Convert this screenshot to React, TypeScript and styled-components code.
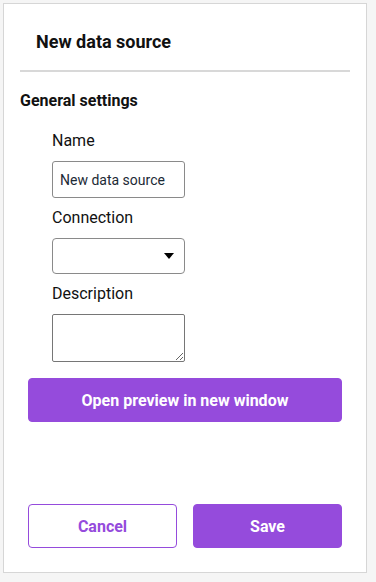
import React from "react";
import styled, { createGlobalStyle } from "styled-components";

const GlobalStyle = createGlobalStyle`
  html, body {
    margin: 0;
    padding: 0;
    background: #f5f5f5;
    font-family: Roboto, "Liberation Sans", sans-serif;
  }
`;

const Page = styled.div`
  padding: 3px 9px 9px 3px;
  box-sizing: border-box;
  width: 376px;
  height: 582px;
`;

const Panel = styled.div`
  height: 570px;
  box-sizing: border-box;
  background: #fff;
  border: 1px solid #d6d6d6;
  display: flex;
  flex-direction: column;
  padding: 0 16px;
`;

const Header = styled.div`
  padding: 28px 0 18px 16px;
  border-bottom: 2px solid #d8d8d8;
  font-size: 18px;
  font-weight: 700;
  color: #111;
  line-height: 20px;
`;

const SectionTitle = styled.div`
  margin-top: 20px;
  font-size: 16px;
  font-weight: 700;
  color: #111;
  line-height: 18px;
`;

const Fields = styled.div`
  padding-left: 32px;
  display: flex;
  flex-direction: column;
  margin-top: 21px;
`;

const Label = styled.label`
  font-size: 16px;
  color: #111;
  line-height: 20px;
  margin-bottom: 10px;
`;

const TextInput = styled.input`
  width: 133px;
  height: 37px;
  box-sizing: border-box;
  border: 1px solid #8a8a8a;
  border-radius: 3px;
  padding: 0 7px;
  font-family: Roboto, "Liberation Sans", sans-serif;
  font-size: 14px;
  color: #1c2a36;
  margin-bottom: 10px;
  outline: none;
`;

const SelectBox = styled.div`
  width: 133px;
  height: 36px;
  box-sizing: border-box;
  border: 1px solid #8a8a8a;
  border-radius: 4px;
  display: flex;
  align-items: center;
  justify-content: flex-end;
  padding-right: 10px;
  margin-bottom: 10px;
`;

const Arrow = styled.div`
  width: 0;
  height: 0;
  border-left: 5px solid transparent;
  border-right: 5px solid transparent;
  border-top: 6px solid #000;
`;

const TextArea = styled.textarea`
  width: 133px;
  height: 48px;
  box-sizing: border-box;
  border: 1px solid #767676;
  border-radius: 2px;
  resize: vertical;
  display: block;
  margin: 0;
  font-family: Roboto, "Liberation Sans", sans-serif;
`;

const Button = styled.button<{ $outline?: boolean }>`
  height: 44px;
  box-sizing: border-box;
  border-radius: 4px;
  border: 1px solid #954bdc;
  background: ${(p) => (p.$outline ? "#fff" : "#954bdc")};
  color: ${(p) => (p.$outline ? "#954bdc" : "#fff")};
  font-family: Roboto, "Liberation Sans", sans-serif;
  font-size: 16px;
  font-weight: 700;
  cursor: pointer;
`;

const PreviewButton = styled(Button)`
  margin: 16px 8px 0 8px;
`;

const Footer = styled.div`
  margin-top: auto;
  margin-bottom: 24px;
  padding: 0 8px;
  display: grid;
  grid-template-columns: 1fr 1fr;
  gap: 16px;
`;

export default function App() {
  return (
    <Page>
      <GlobalStyle />
      <Panel>
        <Header>New data source</Header>
        <SectionTitle>General settings</SectionTitle>
        <Fields>
          <Label>Name</Label>
          <TextInput defaultValue="New data source" />
          <Label>Connection</Label>
          <SelectBox>
            <Arrow />
          </SelectBox>
          <Label>Description</Label>
          <TextArea />
        </Fields>
        <PreviewButton>Open preview in new window</PreviewButton>
        <Footer>
          <Button $outline>Cancel</Button>
          <Button>Save</Button>
        </Footer>
      </Panel>
    </Page>
  );
}
